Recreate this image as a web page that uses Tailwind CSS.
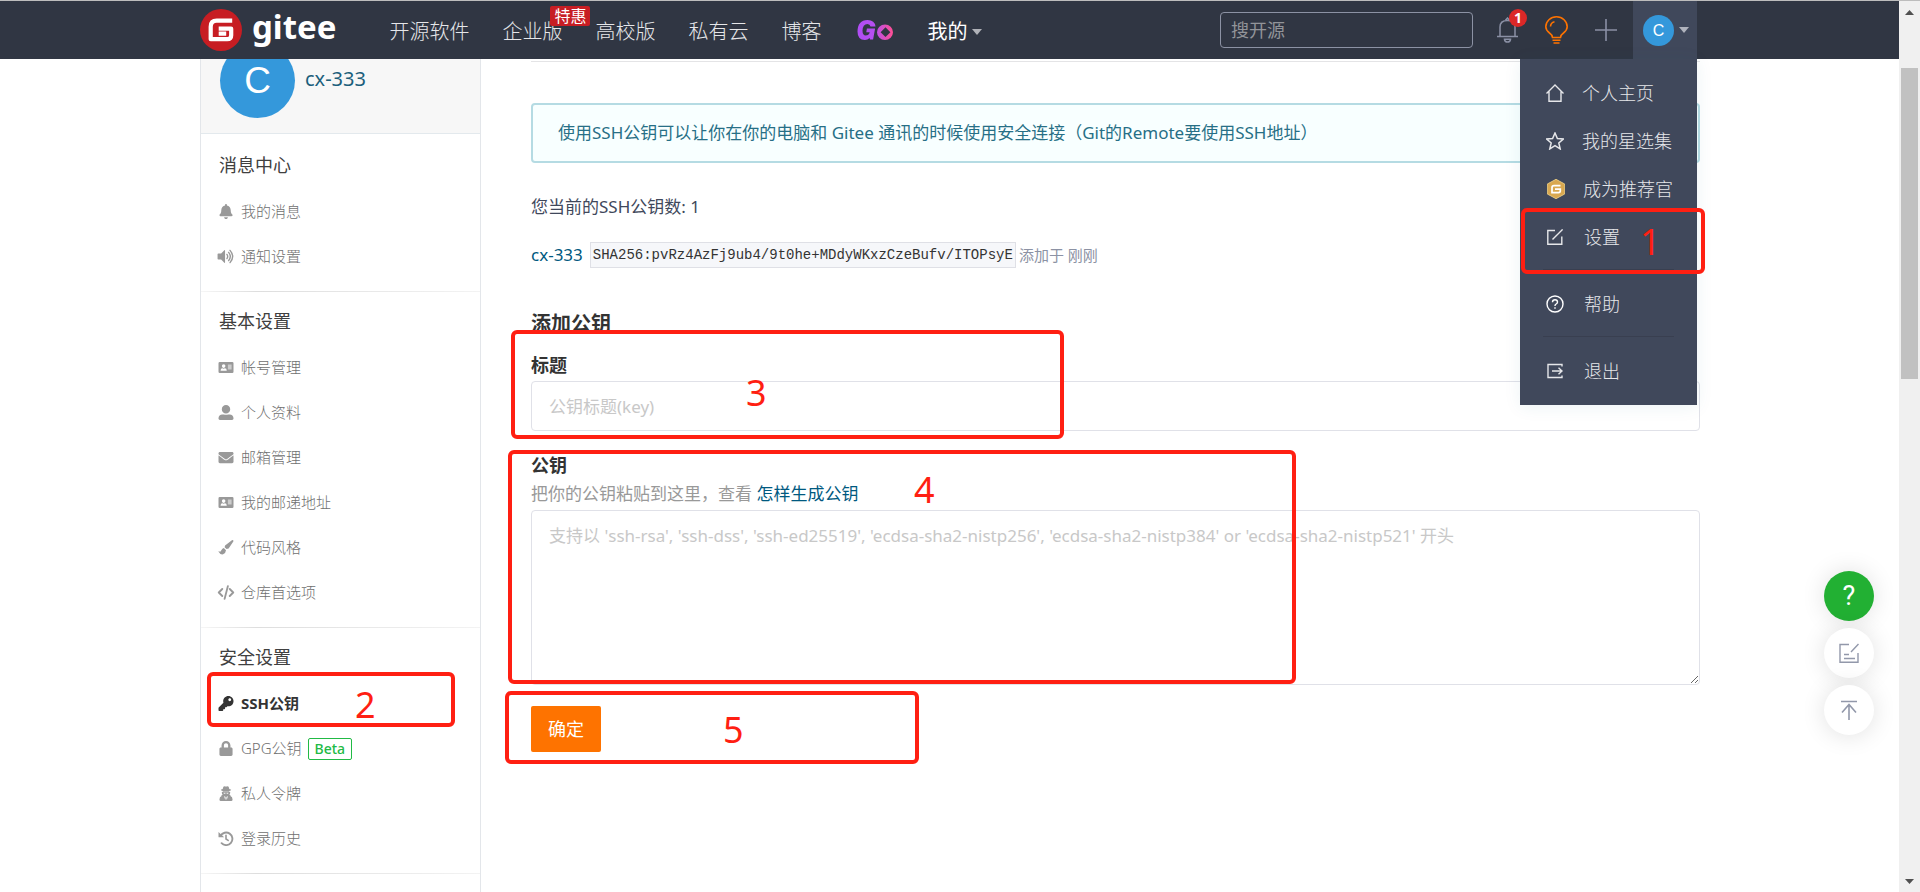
<!DOCTYPE html>
<html lang="zh-CN">
<head>
<meta charset="utf-8">
<title>SSH公钥 - Gitee.com</title>
<meta name="viewport" content="width=device-width, initial-scale=1">
<script src="https://cdn.jsdelivr.net/npm/@tailwindcss/browser@4"></script>
</head>
<body class="relative flex min-h-screen items-stretch overflow-hidden border-t border-[#bdbdbd] bg-white font-['Noto_Sans','Noto_Sans_CJK_SC',sans-serif] text-[17px] text-[#40485b]">

<!-- shared sidebar glyphs -->
<svg class="hidden" aria-hidden="true">
  <symbol id="i-bell" viewBox="0 0 448 512"><path d="M224 512c35.32 0 63.97-28.65 63.97-64H160.03c0 35.35 28.65 64 63.97 64zm215.39-149.71c-19.32-20.76-55.47-51.99-55.47-154.29 0-77.7-54.48-139.9-127.94-155.16V32c0-17.67-14.32-32-31.98-32s-31.98 14.33-31.98 32v20.84C118.56 68.1 64.08 130.3 64.08 208c0 102.3-36.15 133.53-55.47 154.29-6 6.45-8.66 14.16-8.61 21.71.11 16.4 12.98 32 32.1 32h383.8c19.12 0 32-15.6 32.1-32 .05-7.55-2.61-15.27-8.61-21.71z"/></symbol>
  <symbol id="i-volume" viewBox="0 0 18 16"><path d="M0 5.5q0-.8.8-.8h3L7.200 1.300Q8 .8 8 1.800v12.400q0 1-.8.5L3.800 11.300h-3Q0 11.300 0 10.500z"/><path d="M10 5.800q1.600 2.200 0 4.400M11.800 3.600q3.600 4.400 0 8.800M13.300 1.500q5.600 6.500 0 13" fill="none" stroke="currentColor" stroke-width="1.500" stroke-linecap="round"/></symbol>
  <symbol id="i-card" viewBox="0 0 16 16"><path fill-rule="evenodd" d="M1.300 2.200h13.400q1.300 0 1.300 1.300v9q0 1.300-1.300 1.300H1.300Q0 13.800 0 12.500v-9Q0 2.200 1.300 2.200zM5.500 4.600a1.900 1.900 0 1 0 0 3.800a1.900 1.900 0 1 0 0-3.800zM2.200 11.500h6.600q0-2.600-2-2.600-1.300.6-2.600 0-2 0-2 2.600zM10 5v.9h4V5zM10 7v.9h4V7zM10 9v.9h4V9z"/></symbol>
  <symbol id="i-user" viewBox="0 0 512 512"><path d="M256 288c79.500 0 144-64.500 144-144S335.500 0 256 0 112 64.500 112 144s64.500 144 144 144zm128 32h-55.100c-22.200 10.200-46.900 16-72.900 16s-50.600-5.800-72.900-16H128C57.300 320 0 377.300 0 448v16c0 26.500 21.500 48 48 48h416c26.500 0 48-21.500 48-48v-16c0-70.700-57.300-128-128-128z"/></symbol>
  <symbol id="i-mail" viewBox="0 0 512 512"><path d="M502.300 190.800c3.900-3.100 9.700-.2 9.700 4.700V400c0 26.500-21.500 48-48 48H48c-26.500 0-48-21.500-48-48V195.600c0-5 5.700-7.800 9.700-4.700 22.400 17.400 52.100 39.500 154.100 113.600 21.100 15.400 56.700 47.800 92.200 47.600 35.700.3 72-32.800 92.300-47.600 102-74.100 131.600-96.300 154-113.700zM256 320c23.200.4 56.600-29.200 73.400-41.400 132.700-96.300 142.800-104.700 173.400-128.700 5.800-4.500 9.200-11.500 9.200-18.900v-19c0-26.500-21.500-48-48-48H48c-26.500 0-48 21.500-48 48v19c0 7.400 3.400 14.300 9.200 18.900 30.600 23.900 40.700 32.400 173.400 128.700 16.800 12.200 50.200 41.800 73.400 41.400z"/></symbol>
  <symbol id="i-brush" viewBox="0 0 16 16"><path d="M14.300.2q.8-.4 1.300.1t.2 1.300L10.800 9 8.600 9.700 6.500 7.600 7 5.800zM5.700 8.500 8 10.800Q7.700 14 4.900 15.300 2.200 16 .3 12.700L0 11.800l1.600.6Q2.500 12.300 3 10.800 4 8.800 5.700 8.500z"/></symbol>
  <symbol id="i-code" viewBox="0 0 18 16"><path d="M5 4.300 1.300 8 5 11.700M13 4.300 16.700 8 13 11.700M11 1.200 7.500 14.800" fill="none" stroke="currentColor" stroke-width="2" stroke-linecap="round" stroke-linejoin="round"/></symbol>
  <symbol id="i-key" viewBox="0 0 512 512"><path d="M512 176.001C512 273.203 433.202 352 336 352c-11.220 0-22.190-1.062-32.827-3.069l-24.012 27.014A23.999 23.999 0 0 1 261.223 384H224v40c0 13.255-10.745 24-24 24h-40v40c0 13.255-10.745 24-24 24H24c-13.255 0-24-10.745-24-24v-78.059c0-6.365 2.529-12.470 7.029-16.971l161.802-161.802C163.108 213.814 160 195.271 160 176 160 78.798 238.797.001 335.999 0 433.488-.001 512 78.511 512 176.001zM336 128c0 26.510 21.490 48 48 48s48-21.490 48-48-21.490-48-48-48-48 21.490-48 48z"/></symbol>
  <symbol id="i-lock" viewBox="0 0 448 512"><path d="M400 224h-24v-72C376 68.200 307.800 0 224 0S72 68.200 72 152v72H48c-26.500 0-48 21.500-48 48v192c0 26.500 21.500 48 48 48h352c26.500 0 48-21.500 48-48V272c0-26.500-21.500-48-48-48zm-104 0H152v-72c0-39.700 32.300-72 72-72s72 32.300 72 72v72z"/></symbol>
  <symbol id="i-secret" viewBox="0 0 14 16"><path d="M4.500.6Q5.100 0 6 .4q1 .5 2 0 .9-.4 1.500.2.7 1 1 2.600 2 .4 2 .9 0 .8-2 1.200v.7h-7v-.7q-2-.4-2-1.200 0-.5 2-.9.300-1.600 1-2.600z"/><path fill-rule="evenodd" d="M2.500 6.500h9q0 2-.9 3h1.200q-.2.600-.1 1.200 2.300.8 2.300 3.600 0 1.700-1.500 1.700h-11Q0 16 0 14.300q0-2.800 2.300-3.600L2.200 9.500h1.200q-.9-1-.9-3zM4.300 7.200q0 1 1.200 1 1 0 1.200-.9h.6q.2.900 1.200.9 1.200 0 1.200-1zM5 10.800l1.200 4.200.5-2.500-.6-1.400zM9 10.800l-1.200 4.200-.5-2.500.6-1.400z"/></symbol>
  <symbol id="i-history" viewBox="0 0 16 16"><path d="M2.200 5.200A6.700 6.700 0 1 1 3.300 13" fill="none" stroke="currentColor" stroke-width="2" stroke-linecap="round"/><path d="M0 1v5.300q0 .4.400.4H6z"/><path d="M8 4.500v4l2.300 1.600" fill="none" stroke="currentColor" stroke-width="1.700" stroke-linecap="round"/></symbol>
</svg>

<div class="flex min-w-0 flex-1 flex-col">

  <header class="relative z-20 bg-[#303643] pl-px">
    <div class="mx-auto flex h-[58px] w-full max-w-[1500px] items-center">
      <a href="#" aria-label="gitee" class="flex shrink-0 items-center gap-[10px]">
        <svg class="size-[42px]" viewBox="0 0 42 42" aria-hidden="true"><circle cx="21" cy="21" r="21" fill="#c71d23"/><path d="M33 12.500H17.500Q11.500 12.500 11.500 18.500V31H28Q32 31 32 27V20.500H19.500M19.500 25.500H27" transform="translate(-.8 -.8)" fill="none" stroke="#fff" stroke-width="4.200" stroke-linejoin="round"/></svg>
        <span class="pb-[6px] text-[33px] leading-10 font-bold text-white">gitee</span>
      </a>
      <nav class="ml-[53px] flex shrink-0 items-center gap-[33px] pt-[3px] text-[20px] leading-[30px] font-light text-[#e6e7ea]">
        <a href="#">开源软件</a>
        <a href="#" class="relative">企业版<span class="absolute -top-[11px] left-12 rounded-xs bg-[#c71d23] px-1 text-[16px] leading-5 font-normal whitespace-nowrap text-white">特惠</span></a>
        <a href="#">高校版</a>
        <a href="#">私有云</a>
        <a href="#">博客</a>
        <a href="#" aria-label="Go">
          <svg class="h-[30px] w-10" viewBox="0 0 40 30" aria-hidden="true"><defs><linearGradient id="go" gradientUnits="userSpaceOnUse" x1="3" y1="0" x2="39" y2="0"><stop offset="0" stop-color="#b04df5"/><stop offset=".5" stop-color="#b64ff0"/><stop offset="1" stop-color="#ff4f92"/></linearGradient></defs><path fill="url(#go)" fill-rule="evenodd" d="M21.500 9.500h-5q-.5-2.600-3-2.600-4.800.4-5 6.600 0 5 3.300 5 2.700 0 3.500-1.900l.4-1.400h-3.400l.6-3.600h8.200l-2 11h-3.100l-.4-1.500q-2 2-4.700 2-7.400 0-7.400-8.500Q3.700 3 13.500 3q7.300.1 8 6.500zM31 7.500a8 7.700 0 1 0 0 15.400a8 7.700 0 1 0 0-15.400zM31.500 10.300l4.900 4.900-4.900 4.900-4.900-4.900z"/></svg>
        </a>
        <a href="#" class="flex items-center gap-[5px] font-normal text-white">我的<svg class="h-[6px] w-[10px] fill-[#b0b2b8]" viewBox="0 0 10 6" aria-hidden="true"><path d="M0 0h10L5 6z"/></svg></a>
      </nav>
      <div class="mr-[3px] ml-auto flex shrink-0 items-center self-stretch">
        <input type="search" aria-label="搜开源" placeholder="搜开源" class="h-9 w-[253px] rounded border border-[#8c92a4] bg-transparent px-[10px] text-[18px] text-white placeholder:text-[#929499]">
        <button type="button" aria-label="通知" class="relative ml-6 h-[26px] w-[21px]">
          <svg class="h-[26px] w-[21px]" viewBox="0 0 21 26" fill="none" stroke="#8a90a5" stroke-width="1.500" aria-hidden="true"><path d="M0 19.500h21M3 19.500V10q0-6.500 7.500-6.500T18 10v9.500M8.500 3.300 10.500 1l2 2.300M7.500 22.300q.3 2.700 3 2.700t3-2.700z"/></svg>
          <span class="absolute -top-2 left-3 size-[18px] rounded-full bg-[#db2828] text-center text-[14px] leading-[18px] font-bold text-white">1</span>
        </button>
        <button type="button" aria-label="推荐" class="ml-[27px]">
          <svg class="h-7 w-[23px]" viewBox="0 0 23 28" fill="none" stroke="#fe7300" stroke-width="1.600" aria-hidden="true"><path d="M7.500 21.500Q7.300 19 4.500 17 .8 14.200.8 10.800A10.700 10 0 0 1 22.200 10.800Q22.200 14.200 18.500 17 15.700 19 15.500 21.500zM5.500 10.500q.2-3.800 4-4.700M7.500 24.300h8M8.500 27h6"/></svg>
        </button>
        <button type="button" aria-label="新建" class="ml-[27px]">
          <svg class="size-[22px]" viewBox="0 0 22 22" stroke="#8a90a5" stroke-width="1.600" aria-hidden="true"><path d="M11 0v22M0 11h22"/></svg>
        </button>
        <div class="relative ml-4 self-stretch">
          <button type="button" aria-haspopup="true" class="flex h-full w-16 items-center gap-[5px] bg-[#40485b] pl-[10px]">
            <span class="size-[31px] rounded-full bg-[#3498db] text-center font-['Liberation_Sans',sans-serif] text-[16px] leading-[31px] text-white">C</span>
            <svg class="h-[6px] w-[10px] fill-[#b0b3bd]" viewBox="0 0 10 6" aria-hidden="true"><path d="M0 0h10L5 6z"/></svg>
          </button>
          <div class="absolute top-full right-0 w-[177px] bg-[#40485b] pt-[10px] pb-[10px] text-[18px] font-light text-[#e6e7ea] shadow-[0_2px_16px_rgba(0,100,130,0.08)]">
            <a href="#" class="flex h-12 items-center gap-[18px] pl-[26px]"><svg class="size-[18px]" viewBox="0 0 18 18" fill="none" stroke="currentColor" stroke-width="1.400" aria-hidden="true"><path d="M.5 9.500 9 1l8.500 8.500M3 7.500v9.700h12V7.500"/></svg>个人主页</a>
            <a href="#" class="flex h-12 items-center gap-[18px] pl-[26px]"><svg class="size-[18px]" viewBox="0 0 18 18" fill="none" stroke="currentColor" stroke-width="1.500" aria-hidden="true"><path d="M9 1l2.400 5.500 5.900.5-4.500 3.900 1.400 6L9 13.700l-5.200 3.200 1.400-6L.7 7l5.900-.5z"/></svg>我的星选集</a>
            <a href="#" class="flex h-12 items-center gap-[18px] pl-[27px]"><svg class="h-5 w-[18px]" viewBox="0 0 18 20" aria-hidden="true"><path d="M9 .3 17.700 5v10L9 19.700.3 15V5z" fill="#d9a850" stroke="#f3d58a" stroke-width=".8"/><path d="M13.500 6.700H7Q5 6.700 5 8.700V13.600H11.500Q13.300 13.600 13.300 12V10.200H8" fill="none" stroke="#fff" stroke-width="1.700"/></svg>成为推荐官</a>
            <a href="#" class="flex h-12 items-center gap-[21px] pl-[27px]"><svg class="size-4" viewBox="0 0 16 16" fill="none" stroke="currentColor" stroke-width="1.400" aria-hidden="true"><path d="M8 1.500H.8v13.700h14V7.500M5.500 10.500 15.600.4"/></svg>设置</a>
            <hr class="mx-[23px] mt-2 mb-[10px] border-[#393f50]">
            <a href="#" class="flex h-12 items-center gap-[20px] pl-[26px]"><svg class="size-[18px]" viewBox="0 0 18 18" fill="none" stroke="#fff" stroke-width="1.400" aria-hidden="true"><circle cx="9" cy="9" r="8"/><path d="M6.500 7.200Q6.500 4.800 9 4.800t2.500 2.200q0 1.300-1.300 2T9 11M9 12.300v1.500"/></svg>帮助</a>
            <hr class="mx-[23px] mt-2 mb-[10px] border-[#393f50]">
            <a href="#" class="flex h-12 items-center gap-[21px] pl-[27px]"><svg class="size-4" viewBox="0 0 16 16" fill="none" stroke="currentColor" stroke-width="1.400" aria-hidden="true"><path d="M15 3.500V1.500H1v13h14v-2M5 8h9.500M11.500 4.800 15 8l-3.500 3.200"/></svg>退出</a>
          </div>
        </div>
      </div>
    </div>
  </header>

  <div class="-mt-4 flex flex-1 pl-px">
    <div class="mx-auto flex w-full max-w-[1500px] gap-[50px]">

      <aside class="w-[281px] shrink-0 border-x border-[#e3e6ea]">
        <div class="flex h-[91px] gap-[10px] border-b border-[#e3e9ed] bg-[#f7f7f7] pl-[19px]">
          <span class="size-[75px] rounded-full bg-[#3498db] text-center font-['Liberation_Sans',sans-serif] text-[37px] leading-[75px] text-white">C</span>
          <a href="#" class="h-[72px] text-[20px] leading-[72px] text-[#1c5f7c]">cx-333</a>
        </div>
        <nav class="text-[15px] font-light text-[#707070]">
          <section class="pt-[7px] pb-3">
            <h2 class="pl-[18px] text-[18px] leading-12 font-normal text-[#404040]">消息中心</h2>
            <a href="#" class="flex h-[45px] items-center gap-[6px] pl-4"><svg class="h-[15px] w-[18px] fill-[#999]"><use href="#i-bell"/></svg>我的消息</a>
            <a href="#" class="flex h-[45px] items-center gap-[6px] pl-4"><svg class="h-[15px] w-[18px] fill-[#999] text-[#999]"><use href="#i-volume"/></svg>通知设置</a>
          </section>
          <div class="h-px bg-linear-to-r from-[#f6f6f6] via-[#dedede] via-20% to-[#f3f3f3]"></div>
          <section class="pt-[5px] pb-3">
            <h2 class="pl-[18px] text-[18px] leading-12 font-normal text-[#404040]">基本设置</h2>
            <a href="#" class="flex h-[45px] items-center gap-[6px] pl-4"><svg class="h-[15px] w-[18px] fill-[#999]"><use href="#i-card"/></svg>帐号管理</a>
            <a href="#" class="flex h-[45px] items-center gap-[6px] pl-4"><svg class="h-[15px] w-[18px] fill-[#999]"><use href="#i-user"/></svg>个人资料</a>
            <a href="#" class="flex h-[45px] items-center gap-[6px] pl-4"><svg class="h-[15px] w-[18px] fill-[#999]"><use href="#i-mail"/></svg>邮箱管理</a>
            <a href="#" class="flex h-[45px] items-center gap-[6px] pl-4"><svg class="h-[15px] w-[18px] fill-[#999]"><use href="#i-card"/></svg>我的邮递地址</a>
            <a href="#" class="flex h-[45px] items-center gap-[6px] pl-4"><svg class="h-[15px] w-[18px] fill-[#999]"><use href="#i-brush"/></svg>代码风格</a>
            <a href="#" class="flex h-[45px] items-center gap-[6px] pl-4"><svg class="h-[15px] w-[18px] fill-[#999] text-[#999]"><use href="#i-code"/></svg>仓库首选项</a>
          </section>
          <div class="h-px bg-linear-to-r from-[#f6f6f6] via-[#dedede] via-20% to-[#f3f3f3]"></div>
          <section class="pt-[5px] pb-3">
            <h2 class="pl-[18px] text-[18px] leading-12 font-normal text-[#404040]">安全设置</h2>
            <a href="#" aria-current="page" class="relative flex h-[45px] items-center gap-[6px] pl-4 font-bold text-[#333]"><svg class="h-[15px] w-[18px] fill-[#333]"><use href="#i-key"/></svg>SSH公钥
              <span class="absolute -top-[9px] left-[6px] h-[55px] w-[248px] rounded-md border-4 border-[#ff1f12] pt-1 pl-[144px] text-[36px] leading-[49px] font-normal text-[#ff1f12]">2</span>
            </a>
            <a href="#" class="flex h-[45px] items-center gap-[6px] pl-4"><svg class="h-[15px] w-[18px] fill-[#999]"><use href="#i-lock"/></svg>GPG公钥<span class="rounded-xs border border-[#21ba45] px-[6px] text-[14px] leading-5 font-medium text-[#21ba45]">Beta</span></a>
            <a href="#" class="flex h-[45px] items-center gap-[6px] pl-4"><svg class="h-[15px] w-[18px] fill-[#999]"><use href="#i-secret"/></svg>私人令牌</a>
            <a href="#" class="flex h-[45px] items-center gap-[6px] pl-4"><svg class="h-[15px] w-[18px] fill-[#999] text-[#999]"><use href="#i-history"/></svg>登录历史</a>
          </section>
          <div class="h-px bg-linear-to-r from-[#f6f6f6] via-[#dedede] via-20% to-[#f3f3f3]"></div>
        </nav>
      </aside>

      <main class="relative min-w-0 flex-1 pt-[18px]">
        <hr class="border-[#e4e4e6]">
        <p class="mt-[41px] rounded border-2 border-[#b5dbe3] bg-[#f8ffff] px-[25px] text-[17px] leading-[56px] text-[#276f86]">使用SSH公钥可以让你在你的电脑和 Gitee 通讯的时候使用安全连接（Git的Remote要使用SSH地址）</p>
        <p class="mt-[29px] leading-[30px]">您当前的SSH公钥数: 1</p>
        <div class="mt-5 flex items-center">
          <a href="#" class="leading-[26px] text-[#005980]">cx-333</a>
          <code class="ml-[7px] border border-[#dfe0e6] bg-[#f6f7fa] px-[2px] font-['Liberation_Mono',monospace] text-[14px] leading-6 text-[#333]">SHA256:pvRz4AzFj9ub4/9t0he+MDdyWKxzCzeBufv/ITOPsyE</code>
          <span class="ml-[3px] text-[15px] leading-6 text-[#8c92a4]">添加于 刚刚</span>
        </div>

        <form>
          <h1 class="mt-[41px] text-[20px] leading-[30px] font-bold text-[#333]">添加公钥</h1>
          <label for="key-title" class="mt-[11px] block text-[18px] leading-[30px] font-bold text-[#333]">标题</label>
          <input id="key-title" type="text" placeholder="公钥标题(key)" class="mt-px h-[50px] w-full rounded border border-[#e0e1e8] bg-white px-[17px] text-[17px] placeholder:text-[#c8c8c8]">
          <label for="key-body" class="mt-[19px] block text-[18px] leading-[30px] font-bold text-[#333]">公钥</label>
          <p class="leading-7 text-[#999]">把你的公钥粘贴到这里，查看 <a href="#" class="text-[#005980]">怎样生成公钥</a></p>
          <textarea id="key-body" placeholder="支持以 'ssh-rsa', 'ssh-dss', 'ssh-ed25519', 'ecdsa-sha2-nistp256', 'ecdsa-sha2-nistp384' or 'ecdsa-sha2-nistp521' 开头" class="mt-[2px] block h-[175px] w-full rounded border border-[#e0e1e8] bg-white px-[17px] py-3 text-[17px] leading-[26px] placeholder:text-[#c8c8c8]"></textarea>
          <button type="submit" class="mt-[21px] h-[46px] w-[70px] rounded-xs bg-[#fe7300] text-[18px] text-white">确定</button>
        </form>

        <!-- step markers drawn over the form -->
        <div class="absolute top-[287px] -left-5 h-[109px] w-[553px] rounded-md border-4 border-[#ff1f12] pt-[34px] pl-[231px] text-[36px] leading-[49px] text-[#ff1f12]">3</div>
        <div class="absolute top-[407px] -left-[23px] h-[234px] w-[788px] rounded-md border-4 border-[#ff1f12] pt-[11px] pl-[402px] text-[36px] leading-[49px] text-[#ff1f12]">4</div>
        <div class="absolute top-[648px] -left-[26px] h-[73px] w-[414px] rounded-md border-4 border-[#ff1f12] pt-[10px] pl-[214px] text-[36px] leading-[49px] text-[#ff1f12]">5</div>
      </main>
    </div>
  </div>
</div>

<!-- step marker over the open account menu -->
<div class="absolute top-[207px] right-[215px] z-30 h-[66px] w-[184px] rounded-md border-4 border-[#ff1f12] pt-[5px] pl-[115px] text-[36px] leading-[49px] text-[#ff1f12]">1</div>

<div class="absolute right-[46px] bottom-[157px] z-10 flex flex-col gap-[7px]">
  <button type="button" class="size-[50px] rounded-full bg-[#22b033] text-center font-[Roboto,sans-serif] text-[27px] leading-[50px] text-white shadow-[0_0_24px_rgba(0,0,0,0.12)]">?</button>
  <button type="button" aria-label="反馈" class="flex size-[50px] items-center justify-center rounded-full bg-white shadow-[0_1px_24px_rgba(0,0,0,0.12)]"><svg class="size-5" viewBox="0 0 20 20" fill="none" stroke="#9298aa" stroke-width="1.400" aria-hidden="true"><path d="M10 1.500H1v17.700h18V10M12 9 19.500 1M5 11.500h5M5 15.500h11"/></svg></button>
  <button type="button" aria-label="回到顶部" class="flex size-[50px] items-center justify-center rounded-full bg-white shadow-[0_1px_24px_rgba(0,0,0,0.12)]"><svg class="size-5" viewBox="0 0 20 20" fill="none" stroke="#9298aa" stroke-width="1.600" aria-hidden="true"><path d="M2 1.500h16M10 20V5M3 12.500l7-8 7 8"/></svg></button>
</div>

<!-- page scrollbar -->
<div class="flex w-[21px] shrink-0 flex-col items-center bg-[#f0f0f0]" aria-hidden="true">
  <svg class="mt-[9px] h-[5px] w-[9px] fill-[#505050]" viewBox="0 0 9 5"><path d="M0 5h9L4.500 0z"/></svg>
  <div class="mt-[53px] h-[311px] w-[17px] bg-[#c1c1c1]"></div>
  <svg class="mt-auto mb-2 h-[5px] w-[9px] fill-[#505050]" viewBox="0 0 9 5"><path d="M0 0h9L4.500 5z"/></svg>
</div>
</body>
</html>
